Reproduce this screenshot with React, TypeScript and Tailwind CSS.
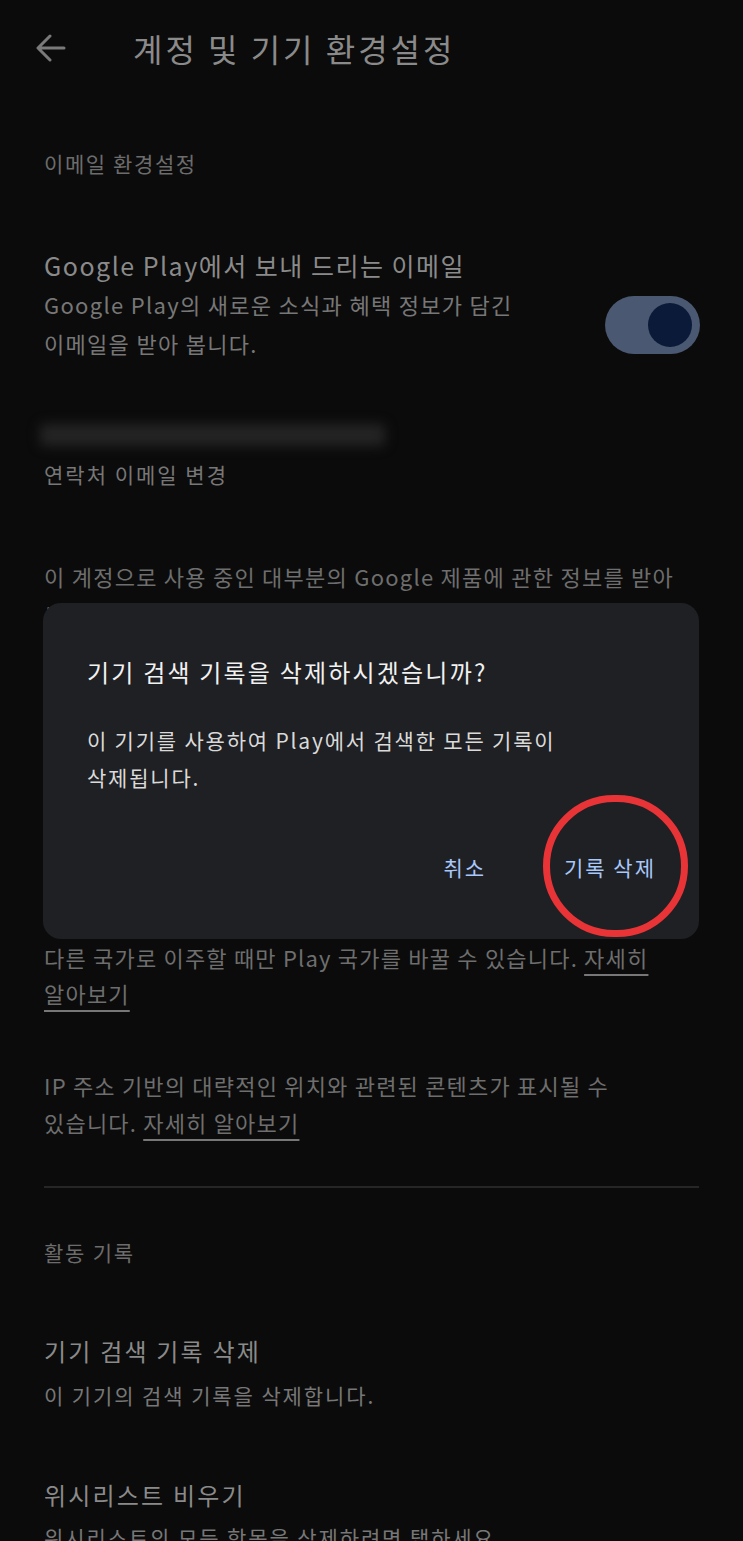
import React from 'react';

const FONT = '"Noto Sans CJK KR", "Noto Sans", Roboto, sans-serif';

function BackArrow() {
    return (
        <svg width="30" height="28" viewBox="0 0 30 28" fill="none">
            <path d="M28 14H3M14 2L2 14l12 12" stroke="#7a7a7a" strokeWidth="3" strokeLinecap="round" strokeLinejoin="round" />
        </svg>
    );
}

function Toggle() {
    return (
        <div className="w-[95px] h-[58px] rounded-full bg-[#4a5872] flex items-center justify-end pr-[8px] shrink-0">
            <div className="w-[44px] h-[44px] rounded-full bg-[#0a1a38]" />
        </div>
    );
}

// Диалог подтверждения поверх страницы
function ConfirmDialog() {
    return (
        <div className="absolute left-[43px] top-[603px] w-[656px] h-[336px] rounded-[18px] bg-[#1f2023] pl-[44px] pr-[43px] pt-[53px]">
            <p className="text-[24px] leading-[32px] tracking-[2.2px] text-[#f1f1f1]">기기 검색 기록을 삭제하시겠습니까?</p>
            <p className="mt-[34px] text-[21px] leading-[37px] tracking-[1.8px] text-[#dadada]">
                이 기기를 사용하여 Play에서 검색한 모든 기록이
                <br />
                삭제됩니다.
            </p>
            <div className="mt-[56px] flex justify-end gap-[78px] text-[21px] leading-[30px] tracking-[2px] text-[#a8c7fa]">
                <span>취소</span>
                <span>기록 삭제</span>
            </div>
            {/* красный круг вокруг кнопки */}
            <div className="absolute left-[500px] top-[192px] w-[145px] h-[142px] rounded-full border-[7px] border-[#e93437]" />
        </div>
    );
}

export default function App() {
    return (
        <div className="relative w-[743px] h-[1541px] overflow-hidden bg-[#0b0b0b]" style={{ fontFamily: FONT }}>
            {/* Шапка */}
            <div className="h-[96px] flex items-center pl-[36px] gap-[67px]">
                <BackArrow />
                <h1 className="text-[32px] leading-[40px] tracking-[3px] text-[#8a8a8a]">계정 및 기기 환경설정</h1>
            </div>

            <div className="px-[44px] flex flex-col">
                <p className="mt-[52px] text-[21px] leading-[30px] tracking-[1.6px] text-[#6c6c6c]">이메일 환경설정</p>

                <div className="mt-[69px] flex items-start justify-between">
                    <div>
                        <p className="text-[25px] leading-[36px] tracking-[1.5px] text-[#8a8a8a]">Google Play에서 보내 드리는 이메일</p>
                        <p className="mt-[2px] text-[22px] leading-[39px] tracking-[1.3px] text-[#777777]">
                            Google Play의 새로운 소식과 혜택 정보가 담긴
                            <br />
                            이메일을 받아 봅니다.
                        </p>
                    </div>
                    <div className="mt-[49px] -mr-[1px]">
                        <Toggle />
                    </div>
                </div>

                {/* Размытый адрес почты */}
                <div className="mt-[57px] h-[30px] w-[345px] -ml-[4px] flex items-center">
                    <div className="h-[22px] w-full rounded bg-[#242424] blur-[6px]" />
                </div>
                <p className="mt-[9px] text-[21px] leading-[30px] tracking-[2px] text-[#777777]">연락처 이메일 변경</p>

                <p className="mt-[68px] text-[22px] leading-[39px] tracking-[1.25px] text-[#6e6e6e]">
                    이 계정으로 사용 중인 대부분의 Google 제품에 관한 정보를 받아
                    <br />
                    봅니다.
                </p>

                {/* Содержимое под диалогом */}
                <div className="h-[304px]" />

                <p className="text-[22px] leading-[36px] tracking-[1.2px] text-[#6e6e6e]">
                    다른 국가로 이주할 때만 Play 국가를 바꿀 수 있습니다.{' '}
                    <span className="underline decoration-2 underline-offset-[7px] decoration-[#777777]">
                        자세히
                        <br />
                        알아보기
                    </span>
                </p>

                <p className="mt-[56px] text-[22px] leading-[37px] tracking-[1.2px] text-[#6e6e6e]">
                    IP 주소 기반의 대략적인 위치와 관련된 콘텐츠가 표시될 수
                    <br />
                    있습니다.{' '}
                    <span className="underline decoration-2 underline-offset-[7px] decoration-[#777777]">자세히 알아보기</span>
                </p>

                <div className="mt-[45px] h-[2px] bg-[#262626]" />

                <p className="mt-[49px] text-[21px] leading-[30px] tracking-[1.8px] text-[#6c6c6c]">활동 기록</p>

                <p className="mt-[66px] text-[24px] leading-[36px] tracking-[2.2px] text-[#8a8a8a]">기기 검색 기록 삭제</p>
                <p className="mt-[9px] text-[21px] leading-[34px] tracking-[1.9px] text-[#777777]">이 기기의 검색 기록을 삭제합니다.</p>

                <p className="mt-[65px] text-[24px] leading-[36px] tracking-[2.2px] text-[#8a8a8a]">위시리스트 비우기</p>
                <p className="mt-[7px] text-[21px] leading-[34px] tracking-[1.9px] text-[#777777]">위시리스트의 모든 항목을 삭제하려면 탭하세요.</p>
            </div>

            <ConfirmDialog />
        </div>
    );
}
